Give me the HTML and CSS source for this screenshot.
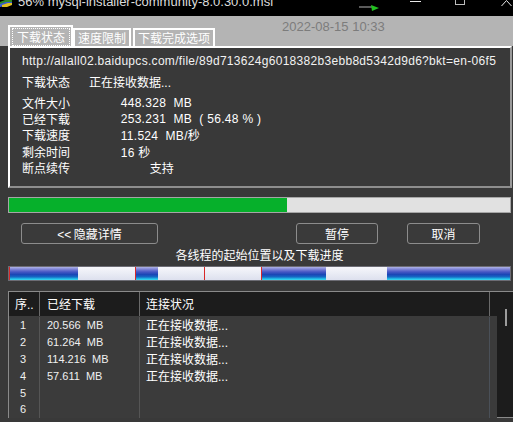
FILE: index.html
```html
<!DOCTYPE html>
<html lang="zh-CN">
<head>
<meta charset="utf-8">
<title>56% mysql-installer-community-8.0.30.0.msi</title>
<link rel="stylesheet" href="styles.css">
</head>
<body>
<div class="window">
  <div class="titlebar">
    <svg class="app-icon" width="13" height="16" viewBox="0 0 13 16">
      <polygon points="0,2 5,0 12,0 12,3 6,5 0,6" fill="#2a8a2a"/>
      <polygon points="0,4 6,2 12,2 12,4 6,6 0,7" fill="#3a5fd0"/>
      <polygon points="2,5 8,3 12,3 12,5 7,7 2,7" fill="#e0c020"/>
    </svg>
    <span class="title">56% mysql-installer-community-8.0.30.0.msi</span>
    <svg class="flag" width="21" height="16" viewBox="0 0 21 16">
      <rect x="0" y="6" width="14" height="2" fill="#5a5a5a"/>
      <polygon points="12,5 20,8 13,11" fill="#22c020"/>
    </svg>
    <svg class="tb-min" width="11" height="16" viewBox="0 0 11 16">
      <rect x="0" y="1" width="11" height="1" fill="#e8e8e8"/>
    </svg>
    <svg class="tb-max" width="11" height="16" viewBox="0 0 11 16">
      <rect x="0.5" y="-5.5" width="9" height="10" fill="none" stroke="#bdbdbd"/>
    </svg>
    <svg class="tb-close" width="11" height="16" viewBox="0 0 11 16">
      <path d="M0.5 6 L5.5 0.5 L10.5 6" fill="none" stroke="#e8e8e8" stroke-width="1"/>
    </svg>
  </div>

  <div class="tabstrip">
    <div class="tab active"><span class="focus">下载状态</span></div>
    <div class="tab">速度限制</div>
    <div class="tab">下载完成选项</div>
    <div class="date">2022-08-15 10:33</div>
  </div>

  <div class="panel">
    <div class="url">http://allall02.baidupcs.com/file/89d713624g6018382b3ebb8d5342d9d6?bkt=en-06f5</div>
    <div class="status-row"><span class="label">下载状态</span><span class="value">正在接收数据<span class="lat">...</span></span></div>
    <div class="metrics">
      <div class="row"><span class="label">文件大小</span><span class="value num">448.328&nbsp; MB</span></div>
      <div class="row"><span class="label">已经下载</span><span class="value num">253.231&nbsp; MB&nbsp; (&nbsp;56.48 %&nbsp;)</span></div>
      <div class="row"><span class="label">下载速度</span><span class="value num">11.524&nbsp; MB/<span class="cjk">秒</span></span></div>
      <div class="row"><span class="label">剩余时间</span><span class="value num">16 <span class="cjk">秒</span></span></div>
      <div class="row"><span class="label">断点续传</span><span class="value indent">支持</span></div>
    </div>
  </div>

  <div class="progress"><div class="fill" style="width:55.4%"></div></div>

  <div class="buttons">
    <div class="btn btn-hide"><span class="lat">&lt;&lt;</span> 隐藏详情</div>
    <div class="btn btn-pause">暂停</div>
    <div class="btn btn-cancel">取消</div>
  </div>

  <div class="caption">各线程的起始位置以及下载进度</div>

  <div class="threads">
    <div class="seg blue mark" style="width:69px"></div>
    <div class="seg white" style="width:57px"></div>
    <div class="seg blue mark" style="width:23px"></div>
    <div class="seg white" style="width:46px"></div>
    <div class="seg white mark" style="width:57px"></div>
    <div class="seg blue mark" style="width:65px"></div>
    <div class="seg white" style="width:61px"></div>
    <div class="seg blue last"></div>
  </div>

  <div class="list">
    <div class="list-main">
      <div class="list-head">
        <div class="c1">序<span class="lat">..</span></div>
        <div class="c2">已经下载</div>
        <div class="c3">连接状况</div>
        <div class="c4"></div>
      </div>
      <div class="list-body">
        <div class="lrow"><div class="c1 n">1</div><div class="c2 n">20.566&nbsp; MB</div><div class="c3">正在接收数据<span class="lat">...</span></div><div class="c4"></div></div>
        <div class="lrow"><div class="c1 n">2</div><div class="c2 n">61.264&nbsp; MB</div><div class="c3">正在接收数据<span class="lat">...</span></div><div class="c4"></div></div>
        <div class="lrow"><div class="c1 n">3</div><div class="c2 n">114.216&nbsp; MB</div><div class="c3">正在接收数据<span class="lat">...</span></div><div class="c4"></div></div>
        <div class="lrow"><div class="c1 n">4</div><div class="c2 n">57.611&nbsp; MB</div><div class="c3">正在接收数据<span class="lat">...</span></div><div class="c4"></div></div>
        <div class="lrow"><div class="c1 n">5</div><div class="c2 n"></div><div class="c3"></div><div class="c4"></div></div>
        <div class="lrow"><div class="c1 n">6</div><div class="c2 n"></div><div class="c3"></div><div class="c4"></div></div>
        <div class="lrow filler"><div class="c1"></div><div class="c2"></div><div class="c3"></div><div class="c4"></div></div>
      </div>
    </div>
    <div class="scrollbar"><div class="thumb"></div></div>
  </div>
</div>
</body>
</html>
```

FILE: styles.css
```css
* { box-sizing: border-box; }
html, body { margin: 0; padding: 0; }
body {
  background: #393939;
  font-family: "Noto Sans CJK SC", "Liberation Sans", sans-serif;
  font-size: 12px;
  color: #ffffff;
  width: 513px;
  height: 422px;
  overflow: hidden;
}
.lat, .num, .n, .url, .date, .title { font-family: "Liberation Sans", "Noto Sans CJK SC", sans-serif; }
.cjk { font-family: "Noto Sans CJK SC", sans-serif; }

/* title bar */
.titlebar {
  height: 16px;
  background: #000;
  display: flex;
  align-items: flex-start;
  overflow: hidden;
}
.app-icon { flex: none; margin-left: 0; }
.title {
  margin-left: 5px;
  margin-top: -5px;
  font-size: 13px;
  line-height: 13px;
  color: #dcdcdc;
  white-space: nowrap;
  flex: none;
}
.flag { flex: none; margin-left: 86px; }
.tb-min { flex: none; margin-left: 30px; }
.tb-max { flex: none; margin-left: 34px; }
.tb-close { flex: none; margin-left: 35px; }

/* tabs */
.tabstrip {
  height: 30px;
  background: #b4b4b4;
  display: flex;
  align-items: flex-end;
  padding-left: 8px;
}
.tab {
  border: 2px solid #ffffff;
  border-bottom: none;
  height: 18px;
  padding: 0 3px;
  line-height: 15px;
  color: #fff;
  white-space: nowrap;
}
.tab.active {
  height: 21px;
  padding: 1px 1px 0 2px;
}
.tab:nth-child(3) { margin-left: 2px; }
.focus {
  display: block;
  border: 1px dotted #ffffff;
  padding: 0 4px;
  line-height: 16px;
}
.date {
  align-self: flex-start;
  margin-top: 3px;
  margin-left: 67px;
  font-size: 13px;
  line-height: 15px;
  color: #7c7c7c;
}

/* panel */
.panel {
  margin: 0 1px 0 8px;
  height: 142px;
  border-top: 2px solid #ffffff;
  border-left: 2px solid #ffffff;
  border-right: 2px solid #9a9a9a;
  border-bottom: 2px solid #8e8e8e;
  padding: 5px 0 0 12px;
  background: #393939;
}
.url {
  font-size: 12px;
  letter-spacing: 0.3px;
  line-height: 17px;
  white-space: nowrap;
  color: #f2f2f2;
}
.status-row {
  margin-top: 3px;
  line-height: 17px;
  display: flex;
}
.status-row .label { width: 67px; }
.metrics { margin-top: 2.6px; }
.row { display: flex; line-height: 16.4px; height: 16.4px; }
.row .label { width: 98.7px; flex: none; }
.value.num { font-size: 12px; letter-spacing: 0.3px; white-space: nowrap; }
.value.indent { padding-left: 29px; }

/* progress */
.progress {
  margin: 9px 2px 0 8px;
  height: 16px;
  border: 1px solid #a6a6a6;
  background: #e1e1e1;
}
.progress .fill { height: 100%; background: #06b02b; }

/* buttons */
.buttons {
  display: flex;
  margin-top: 10px;
  padding-left: 21px;
  height: 21px;
}
.btn {
  height: 21px;
  border: 1px solid #8c8c8c;
  border-radius: 3px;
  text-align: center;
  line-height: 19px;
  color: #fff;
  background: #3a3a3a;
}
.btn-hide { width: 137px; }
.btn-pause { width: 82px; margin-left: 138px; }
.btn-cancel { width: 73px; margin-left: 29px; }

.caption {
  margin: 3px 2px 0 8px;
  text-align: center;
  line-height: 16px;
}

/* thread bar */
.threads {
  margin: 3px 2px 0 8px;
  height: 15px;
  border: 1px solid #6c6c74;
  display: flex;
}
.seg { height: 100%; flex: none; }
.seg.blue {
  background: linear-gradient(to bottom, #aeb2e6 0%, #7c82d6 18%, #4656c4 38%, #1a46b6 58%, #1668c4 76%, #22b6e4 90%, #38dcf2 100%);
}
.seg.white {
  background: linear-gradient(to bottom, #f6f6fa 0%, #eceef6 40%, #dde0ee 100%);
}
.seg.last { flex: 1; }
.seg.mark { border-left: 1px solid #d82828; }

/* list */
.list {
  margin: 10px 0 0 8px;
  height: 127px;
  border-top: 1px solid #8a8a8a;
  border-bottom: 1px solid #8a8a8a;
  border-left: 1px solid #8a8a8a;
  display: flex;
}
.list-main { width: 488px; flex: none; display: flex; flex-direction: column; }
.list-head {
  display: flex;
  height: 24px;
  background: #1c1c1c;
  line-height: 24px;
}
.list-head > div { border-right: 1px solid #6a6a6a; }
.list-head .c4 { border-right: none; }
.c1 { width: 31px; flex: none; padding-left: 6px; }
.c2 { width: 100px; flex: none; padding-left: 7px; }
.c3 { width: 350px; flex: none; padding-left: 6px; }
.c4 { width: 7px; flex: none; }
.list-body {
  flex: 1;
  background: #3b3b3b;
  padding-top: 1px;
  display: flex;
  flex-direction: column;
}
.lrow { display: flex; height: 16.9px; line-height: 16.9px; }
.lrow.filler { flex: 1; }
.lrow > div { border-right: 1px solid #555555; white-space: nowrap; }
.lrow > .c3 { border-right-color: #4a5058; }
.lrow > .c4 { border-right: none; }
.lrow .c1 { padding-left: 11px; }
.n { font-size: 11px; color: #f0f0f0; }
.scrollbar {
  flex: 1;
  background: #1c1c1c;
  position: relative;
}
.thumb {
  position: absolute;
  left: 8px;
  top: 17px;
  width: 2px;
  height: 17px;
  background: #9c9c9c;
}
```
